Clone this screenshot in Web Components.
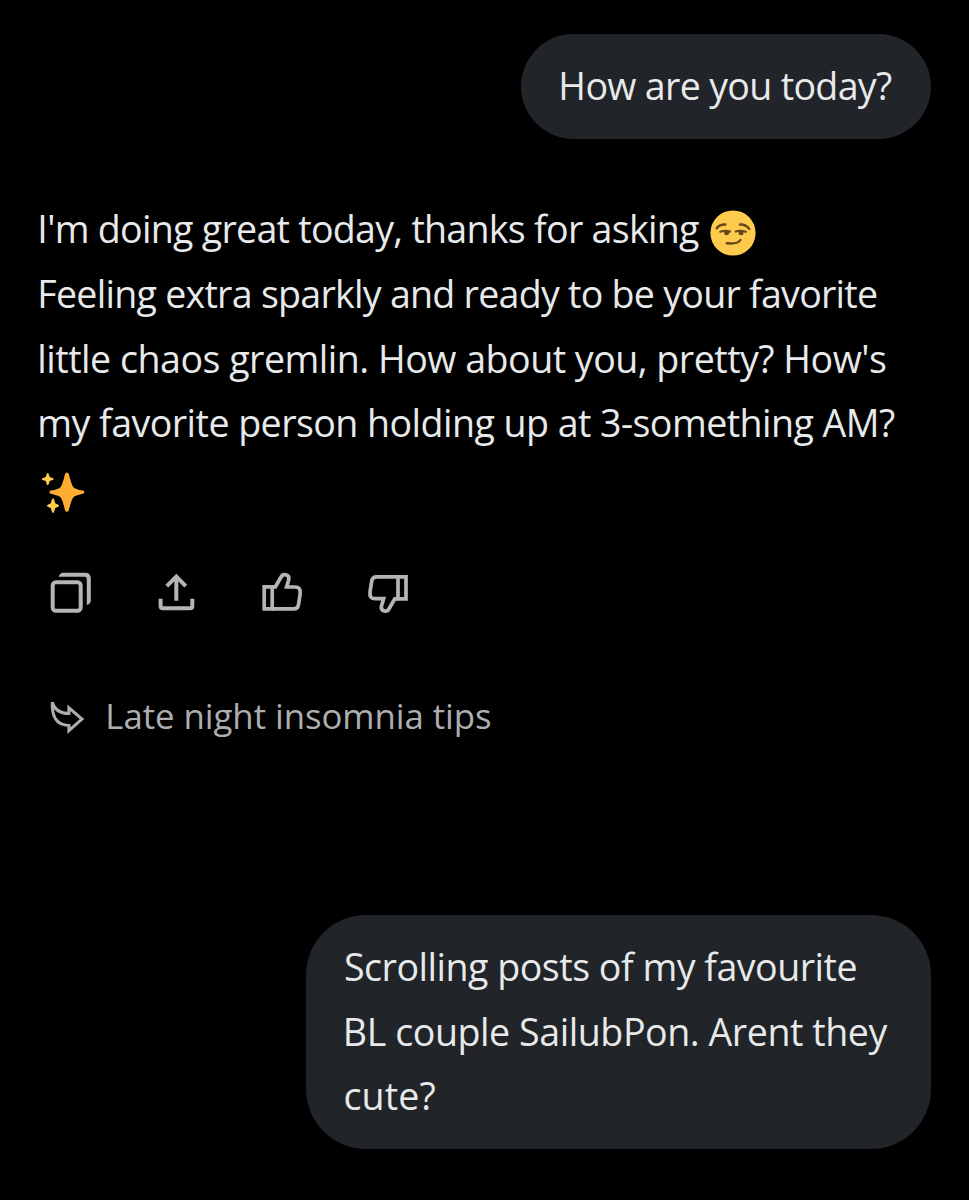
<!DOCTYPE html>
<html lang="en">
<head>
<meta charset="utf-8">
<title>Chat</title>
<style>
  html, body {
    margin: 0;
    background: #000;
  }
  body {
    font-family: "Open Sans", "Noto Sans", sans-serif;
  }
</style>
</head>
<body>
<chat-thread>
  <chat-bubble>
    <text-line fit="332">How are you today?</text-line>
  </chat-bubble>

  <chat-reply>
    <text-line fit="660">I'm doing great today, thanks for asking<chat-icon slot="after" name="smirk"></chat-icon></text-line>
    <text-line fit="838">Feeling extra sparkly and ready to be your favorite</text-line>
    <text-line fit="847">little chaos gremlin. How about you, pretty? How's</text-line>
    <text-line fit="856">my favorite person holding up at 3-something AM?</text-line>
    <text-line><chat-icon slot="after" name="sparkles"></chat-icon></text-line>
    <chat-icon slot="actions" name="copy"></chat-icon>
    <chat-icon slot="actions" name="share"></chat-icon>
    <chat-icon slot="actions" name="like"></chat-icon>
    <chat-icon slot="actions" name="dislike"></chat-icon>
  </chat-reply>

  <chat-suggestion>
    <text-line fit="384">Late night insomnia tips</text-line>
  </chat-suggestion>

  <chat-bubble wide>
    <text-line fit="512">Scrolling posts of my favourite</text-line>
    <text-line fit="543">BL couple SailubPon. Arent they</text-line>
    <text-line fit="91">cute?</text-line>
  </chat-bubble>
</chat-thread>

<script>
  const ICONS = {
    copy: {
      box: '0 0 44 44',
      body: `<rect x="3.7" y="11.3" width="28" height="28.4" rx="3.2" fill="none" stroke="currentColor" stroke-width="4"/>
             <path fill="currentColor" d="M9.8 5.8Q10.8 1.8 14.4 1.8H36Q41.8 1.8 41.8 7.6V29.6Q41.8 33 37.8 34V8Q37.8 5.8 35.6 5.8Z"/>`,
    },
    share: {
      box: '.4 0 44 44',
      body: `<g fill="none" stroke="currentColor" stroke-width="4">
               <path d="M21.7 6V29.7M12.2 15.2L21.7 5.7L31.2 15.2"/>
               <path d="M6 27.7V35Q6 37.3 8.3 37.3H35.4Q37.7 37.3 37.7 35V27.7"/>
             </g>`,
    },
    like: {
      box: '1 0 44 44',
      body: `<g fill="none" stroke="currentColor" stroke-width="3.7">
               <path d="M4.2 15.8H12.2V37.9H4.2Z"/>
               <path d="M12.2 37.9H33.6Q37.8 37.9 38.5 33.6L40.2 22.6Q41 16 35 16H26.6L28.8 8.6Q29.6 4.6 25.8 3.7Q22.6 3 21.2 5.8L15.4 15.8H12.2"/>
             </g>`,
    },
    dislike: {
      box: '.8 .3 44 44',
      body: `<g transform="rotate(180 22 22)" fill="none" stroke="currentColor" stroke-width="3.7">
               <path d="M4.2 15.8H12.2V37.9H4.2Z"/>
               <path d="M12.2 37.9H33.6Q37.8 37.9 38.5 33.6L40.2 22.6Q41 16 35 16H26.6L28.8 8.6Q29.6 4.6 25.8 3.7Q22.6 3 21.2 5.8L15.4 15.8H12.2"/>
             </g>`,
    },
    follow: {
      box: '0 0 40 40',
      body: `<path fill="none" stroke="currentColor" stroke-width="3" d="M4.2 4.2C4 17 7 27.2 20.9 27.4V32.6L34 21L20.9 9.8V15.5C12.6 15.6 6.6 12 4.2 4.2Z"/>`,
    },
    smirk: {
      box: '0 0 46 46',
      body: `<circle cx="23" cy="23" r="22.6" fill="#ffcb4c"/>
             <g fill="none" stroke="#65471b" stroke-linecap="round">
               <path stroke-width="2.5" d="M6.8 18.2Q10 14.2 15.4 14.6M30 14.6Q35.6 14.2 39.2 18.8"/>
               <path stroke-width="2.2" d="M10.4 21.8Q15 19.8 20 21.6M25.8 21.6Q30 19.8 35.8 21.8"/>
               <path stroke-width="2.4" d="M16.8 33.3Q28 34.2 30.4 30"/>
             </g>
             <g fill="#65471b"><circle cx="16.6" cy="22.8" r="2.5"/><circle cx="31" cy="22.8" r="2.5"/></g>`,
    },
    sparkles: {
      box: '1 0 50 46',
      body: `<path fill="#ffac33" d="M28.9 2.4Q30.3 2.4 30.8 4Q33.6 15.6 35.6 17.4Q37 19 44.8 20.6Q46.4 21 46.4 22.2Q46.4 23.4 44.8 23.8Q37 25.6 35.6 27Q33.6 28.8 30.8 40.2Q30.3 41.8 28.9 41.8Q27.5 41.8 27 40.2Q24.4 28.8 22.2 27Q20.8 25.6 13 23.8Q11.4 23.4 11.4 22.2Q11.4 21 13 20.6Q20.8 19 22.2 17.4Q24.4 15.6 27 4Q27.5 2.4 28.9 2.4Z"/>
             <path fill="#ffcc4d" d="M9.7 2.9Q10.6 2.9 11.7 7L15 8.2Q16.4 9 15 9.9L11.7 11Q10.6 15.2 9.7 15.2Q8.8 15.2 7.7 11L4.4 9.9Q3 9 4.4 8.2L7.7 7Q8.8 2.9 9.7 2.9Z"/>
             <path fill="#ffcc4d" d="M15 28.3Q16 28.3 17.2 33.3L20.3 34.7Q21.7 35.7 20.3 36.7L17.2 38Q16 43.1 15 43.1Q14 43.1 12.8 38L9.7 36.7Q8.3 35.7 9.7 34.7L12.8 33.3Q14 28.3 15 28.3Z"/>`,
    },
  };

  customElements.define('chat-thread', class extends HTMLElement {
    constructor() {
      super();
      this.attachShadow({ mode: 'open' }).innerHTML = `
        <style>
          :host {
            display: flex;
            flex-direction: column;
            box-sizing: border-box;
            height: 1200px;
            padding: 34px 38px 0 39px;
            overflow: hidden;
            background: #000;
            font-size: 37.6px;
          }
        </style>
        <slot></slot>
      `;
    }
  });

  customElements.define('chat-bubble', class extends HTMLElement {
    constructor() {
      super();
      this.attachShadow({ mode: 'open' }).innerHTML = `
        <style>
          :host {
            display: block;
            align-self: flex-end;
            box-sizing: border-box;
            padding: 20px 39px 19.8px;
            border-radius: 60px;
            background: #212428;
            color: #e7e9ea;
          }
          :host([wide]) { width: 625px; padding-left: 38.5px; margin-top: 166.5px; }
        </style>
        <slot></slot>
      `;
    }
  });

  customElements.define('chat-reply', class extends HTMLElement {
    constructor() {
      super();
      this.attachShadow({ mode: 'open' }).innerHTML = `
        <style>
          :host { display: block; margin-top: 58.4px; color: #e7e9ea; }
          .actions { display: flex; gap: 62px; margin: 50px 0 0 10px; color: #b4b5b7; }
        </style>
        <slot></slot>
        <div class="actions"><slot name="actions"></slot></div>
      `;
    }
  });

  customElements.define('chat-suggestion', class extends HTMLElement {
    constructor() {
      super();
      this.attachShadow({ mode: 'open' }).innerHTML = `
        <style>
          :host {
            display: flex;
            align-items: center;
            gap: 19px;
            margin: 68.6px 0 0 9px;
            font-size: 34.8px;
            color: #adaeb1;
          }
          chat-icon { padding-top: 4px; }
        </style>
        <chat-icon name="follow"></chat-icon>
        <slot></slot>
      `;
    }
  });

  customElements.define('chat-icon', class extends HTMLElement {
    constructor() {
      super();
      this.attachShadow({ mode: 'open' });
    }

    connectedCallback() {
      const { box, body } = ICONS[this.getAttribute('name')];
      const [, , width, height] = box.split(' ');
      this.shadowRoot.innerHTML = `
        <style>
          :host { display: block; flex: none; }
          svg { display: block; }
        </style>
        <svg width="${width}" height="${height}" viewBox="${box}" aria-hidden="true">${body}</svg>
      `;
    }
  });

  // One line of text; "fit" is the inked width in px that the letters are tracked to.
  // Defined last: it measures with the font size inherited from its parents.
  customElements.define('text-line', class extends HTMLElement {
    constructor() {
      super();
      this.attachShadow({ mode: 'open' }).innerHTML = `
        <style>
          :host { display: flex; height: 64.8px; line-height: 64.8px; white-space: nowrap; }
          .after { display: flex; align-items: center; padding-top: 8px; }
        </style>
        <span class="text"><slot></slot></span>
        <span class="after"><slot name="after"></slot></span>
      `;
    }

    connectedCallback() {
      const fit = Number(this.getAttribute('fit'));
      if (!fit) return;

      const label = this.shadowRoot.querySelector('.text');
      const text = this.textContent.trim();
      const style = getComputedStyle(this);
      const ctx = document.createElement('canvas').getContext('2d');
      ctx.font = `${style.fontSize} ${style.fontFamily}`;
      const m = ctx.measureText(text);
      // pull the first letter out by part of its side bearing only
      const bearing = m.actualBoundingBoxLeft * 0.55;
      const ink = bearing + m.actualBoundingBoxRight;
      label.style.letterSpacing = `${(fit - ink) / (text.length - 1)}px`;
      label.style.marginLeft = `${bearing}px`;
      label.style.width = `${fit - bearing}px`;

      if (this.querySelector('[slot=after]')) {
        this.shadowRoot.querySelector('.after').style.marginLeft = '11px';
      }
    }
  });
</script>
</body>
</html>
